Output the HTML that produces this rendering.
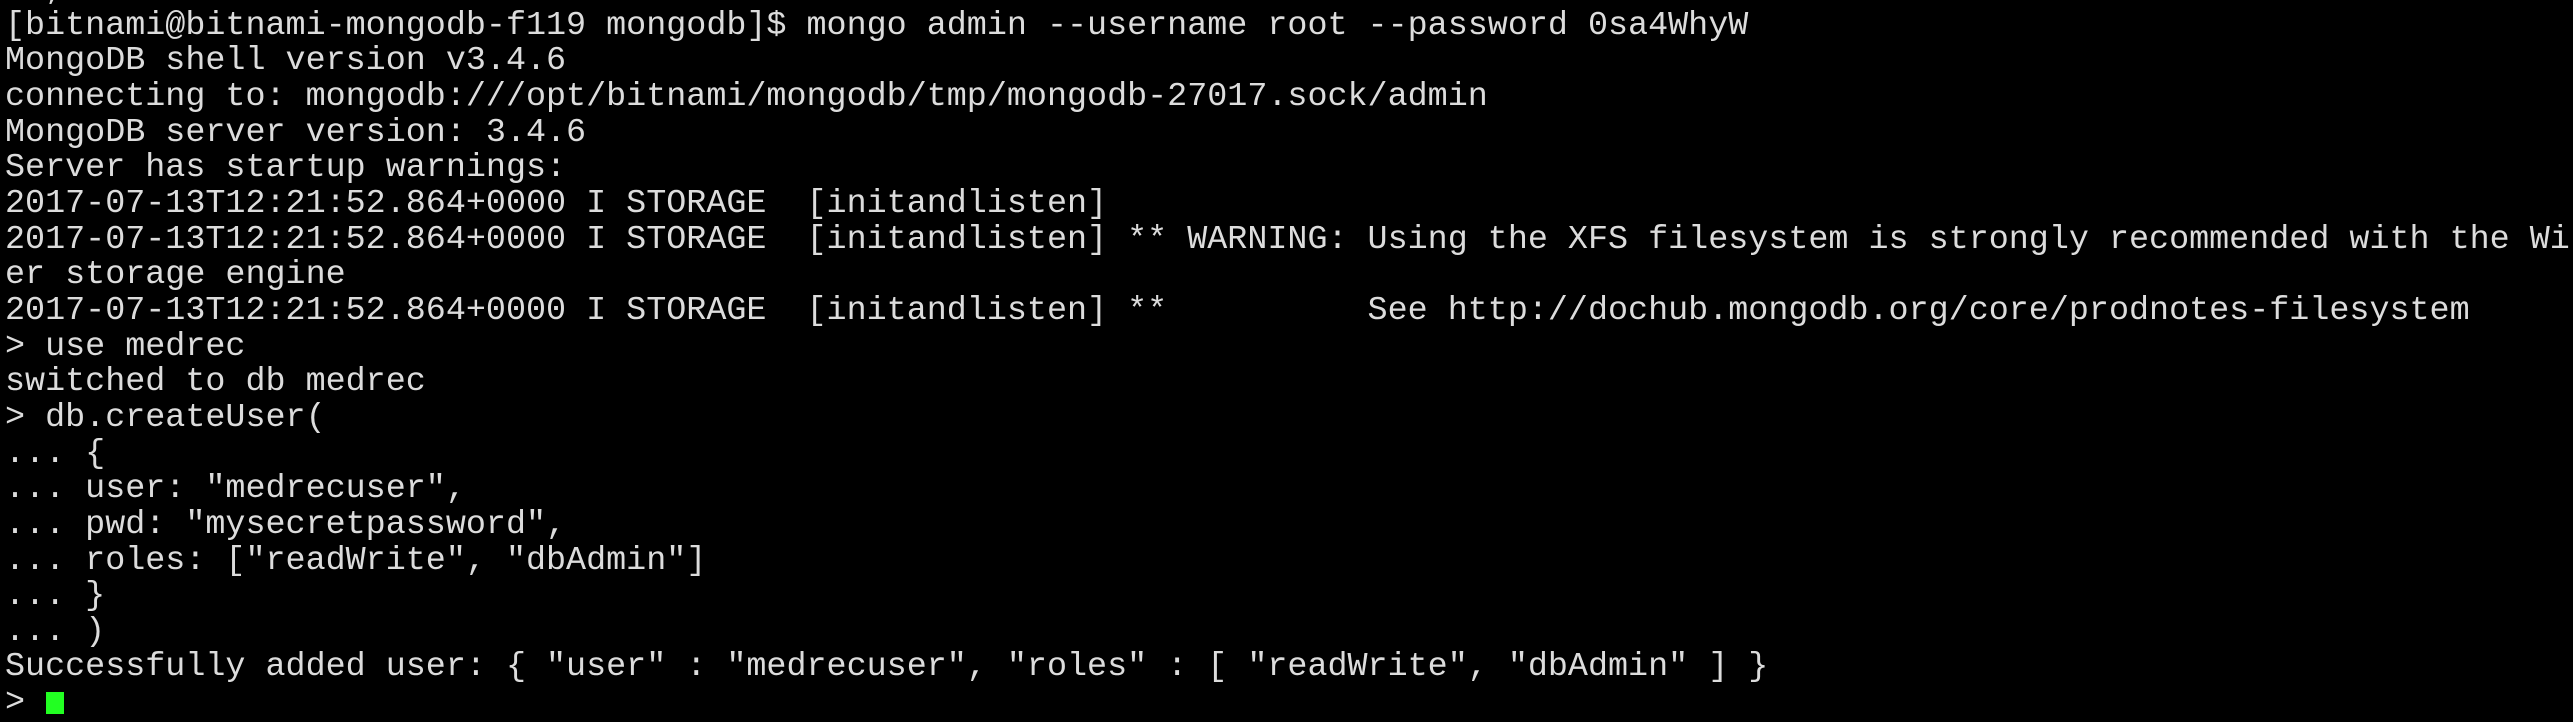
<!DOCTYPE html>
<html><head><style>
html,body{margin:0;padding:0;background:#000;width:2573px;height:711px;overflow:hidden}
pre{margin:0;position:absolute;left:5px;top:-27px;font-family:"Liberation Mono",monospace;font-size:33.4px;line-height:35.65px;color:#dcdcdc;white-space:pre}
.c{position:absolute;left:46px;top:692px;width:18px;height:22px;background:#22ff22}
</style></head><body><pre>  ,
[bitnami@bitnami-mongodb-f119 mongodb]$ mongo admin --username root --password 0sa4WhyW
MongoDB shell version v3.4.6
connecting to: mongodb:///opt/bitnami/mongodb/tmp/mongodb-27017.sock/admin
MongoDB server version: 3.4.6
Server has startup warnings:
2017-07-13T12:21:52.864+0000 I STORAGE  [initandlisten]
2017-07-13T12:21:52.864+0000 I STORAGE  [initandlisten] ** WARNING: Using the XFS filesystem is strongly recommended with the WiredTig
er storage engine
2017-07-13T12:21:52.864+0000 I STORAGE  [initandlisten] **          See http://dochub.mongodb.org/core/prodnotes-filesystem
&gt; use medrec
switched to db medrec
&gt; db.createUser(
... {
... user: "medrecuser",
... pwd: "mysecretpassword",
... roles: ["readWrite", "dbAdmin"]
... }
... )
Successfully added user: { "user" : "medrecuser", "roles" : [ "readWrite", "dbAdmin" ] }
&gt; </pre><div class="c"></div></body></html>
